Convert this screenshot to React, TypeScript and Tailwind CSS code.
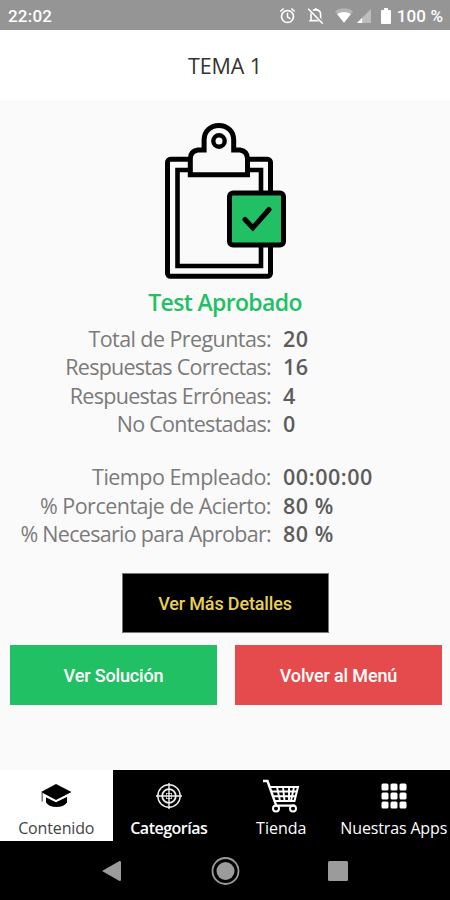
import React from 'react';

type Stat = { label: string; value: string; tracking: string };

const answers: Stat[] = [
  { label: 'Total de Preguntas:', value: '20', tracking: 'tracking-[-0.58px]' },
  { label: 'Respuestas Correctas:', value: '16', tracking: 'tracking-[-0.76px]' },
  { label: 'Respuestas Erróneas:', value: '4', tracking: 'tracking-[-0.7px]' },
  { label: 'No Contestadas:', value: '0', tracking: 'tracking-[-0.71px]' },
];

const results: Stat[] = [
  { label: 'Tiempo Empleado:', value: '00:00:00', tracking: 'tracking-[-0.51px]' },
  { label: '% Porcentaje de Acierto:', value: '80 %', tracking: 'tracking-[-0.52px]' },
  { label: '% Necesario para Aprobar:', value: '80 %', tracking: 'tracking-[-0.71px]' },
];

const StatusBar = () => (
  <div className="flex h-[30px] shrink-0 items-center bg-[#959595] pl-2 pr-[7px] font-['Roboto',sans-serif] text-[17px] font-medium text-white">
    <span className="pt-[3px] tracking-[0.2px]">22:02</span>
    <svg className="ml-auto mt-px h-[18px] w-[104px]" viewBox="279 7 104 18" fill="none">
      <circle cx="286.5" cy="16.5" r="6" stroke="#fff" strokeWidth="1.7" />
      <path d="M286.5 12.8V17l3 1.8M279.3 11.5l3.4-3M293.7 11.5l-3.4-3" stroke="#fff" strokeWidth="1.5" />
      <path d="M310 20.5v-6.3c0-2.5 1.7-4.2 4.8-4.6 3 .4 4.8 2.1 4.8 4.6v6.3zM308.2 20.8h13.2M314.8 8v2" stroke="#fff" strokeWidth="1.6" />
      <path d="M308.2 8.9l13.8 14.4" stroke="#959595" strokeWidth="3.5" />
      <path d="M307.2 8.7l14.6 15" stroke="#fff" strokeWidth="1.6" />
      <path d="M334 11.5c5-4.2 13-4.2 18 0l-9 11.2z" fill="#b5b5b5" />
      <path d="M336.2 14.2c4-3.1 9.6-3.1 13.6 0L343 22.7z" fill="#fff" />
      <path d="M356 23l14-14v14z" fill="#bdbdbd" />
      <path d="M356 23l5.2-5.2V23z" fill="#fff" />
    </svg>
    <svg className="ml-[-3px] mt-px h-[18px] w-[10px]" viewBox="0 0 10 18">
      <path d="M3 1h4v2h2q1 0 1 1v12q0 1-1 1H1q-1 0-1-1V4q0-1 1-1h2z" fill="#fff" />
    </svg>
    <span className="ml-[6px] pt-[3px] tracking-[0.1px]">100 %</span>
  </div>
);

const ClipboardIcon = () => (
  <svg className="ml-[164px] h-[158px] w-[124px]" viewBox="164 122 124 158" fill="none" stroke="#000" strokeWidth="5">
    <rect x="167.5" y="159.3" width="103" height="117" rx="3" />
    <path d="M177.5 170h83.5v96h-83.5z" strokeWidth="4.6" />
    <path
      d="M190.3 174.8v-16q0-7.5 7.5-8.8h6.3v-10c0-19.5 29.6-19.5 29.6 0v10h6.3q7.5 1.3 7.5 8.8v16z"
      fill="#fafafa"
    />
    <circle cx="219" cy="141" r="5.7" strokeWidth="4.4" />
    <rect x="229.5" y="193" width="54" height="52" rx="3.5" fill="#22c064" />
    <path d="M245 219.5l7.8 8.3 16.2-18.3" strokeWidth="5" strokeLinecap="round" />
  </svg>
);

const StatRow = ({ label, value, tracking }: Stat) => (
  <div className="flex h-[28.3px] items-center gap-3 whitespace-nowrap text-[21.5px]">
    <span className={`w-[271px] text-right text-[#7a7a7a] ${tracking}`}>{label}</span>
    <span className="font-semibold tracking-[0.55px] text-[#5c5c5c]">{value}</span>
  </div>
);

const CapIcon = () => (
  <svg className="h-[26px] w-[32px]" viewBox="0 0 32 26">
    <path d="M16 1L31.5 9 16 17 1 9z" fill="#000" />
    <path d="M6 13.5l10 5 11-5v6c-4 6-17 6-21 0z" fill="#000" />
    <path d="M5 13l11 5.4L27 13" stroke="#fff" strokeWidth="1.4" fill="none" />
    <path d="M2.2 10v5M2.2 15v3.5" stroke="#777" strokeWidth="1.5" />
  </svg>
);

const TargetIcon = () => (
  <svg className="h-[26px] w-[26px]" viewBox="0 0 26 26" fill="none" stroke="#eee" strokeWidth="1.4">
    <circle cx="13" cy="13" r="11.2" />
    <circle cx="13" cy="13" r="6.8" strokeWidth="1.8" />
    <path d="M13 0v26M0 13h26" />
    <path d="M10.5 10v6M15.5 10v6M10 10.5h6M10 15.5h6" strokeWidth="0.7" />
  </svg>
);

const CartIcon = () => (
  <svg className="h-[34px] w-[38px]" viewBox="0 0 38 34" fill="none" stroke="#fff" strokeWidth="2">
    <path d="M1 2h4.5l8.7 24.6H33" strokeWidth="2.4" />
    <path d="M8 8h28l-3.5 14H13" />
    <path d="M10 12.5h25M11.5 17.3h22M15 8l3 14M21 8l1.5 14M27 8v14M32 8l-3 14" strokeWidth="1.9" />
    <circle cx="14" cy="29.5" r="3" />
    <circle cx="31" cy="29.5" r="3" />
  </svg>
);

const GridIcon = () => (
  <svg className="h-[26px] w-[26px]" viewBox="0 0 26 26" fill="#fff">
    {[0, 9, 18].map(y =>
      [0, 9, 18].map(x => <rect key={`${x}-${y}`} x={x + 0.5} y={y + 0.5} width="7" height="7" rx="1.5" />)
    )}
  </svg>
);

const tabs = [
  { label: 'Contenido', icon: <CapIcon />, style: 'bg-white text-[#444] tracking-[-0.15px]' },
  { label: 'Categorías', icon: <TargetIcon />, style: 'text-white font-semibold tracking-[-0.5px]' },
  { label: 'Tienda', icon: <CartIcon />, style: 'text-white font-medium tracking-[0px]' },
  { label: 'Nuestras Apps', icon: <GridIcon />, style: 'text-white font-medium tracking-[-0.15px]' },
];

const buttonStyle = "h-[60px] w-[207px] font-['Roboto',sans-serif] text-[18px] font-medium tracking-[-0.15px]";

export default function App() {
  return (
    <div className="flex h-[900px] w-[450px] flex-col overflow-hidden bg-[#fafafa] font-['Open_Sans','Noto_Sans',sans-serif]">
      <StatusBar />
      <header className="flex h-[70px] shrink-0 items-center justify-center bg-white pt-[2px] text-[21.5px] tracking-[-0.1px] text-[#333]">
        TEMA 1
      </header>

      <main className="flex-1 pt-[22px]">
        <ClipboardIcon />
        <h1 className="flex h-[45px] items-center justify-center text-[23px] font-semibold tracking-[-0.65px] text-[#22c064]">
          Test Aprobado
        </h1>
        <div>
          {answers.map(row => <StatRow key={row.label} {...row} />)}
        </div>
        <div className="mt-[25px]">
          {results.map(row => <StatRow key={row.label} {...row} />)}
        </div>
        <div className="mt-[25px] flex justify-center">
          <button className={`${buttonStyle} border border-[#777] bg-black text-[#e8cf58]`}>Ver Más Detalles</button>
        </div>
        <div className="mt-[12px] flex justify-between pl-[10px] pr-[8px]">
          <button className={`${buttonStyle} bg-[#22c064] text-white`}>Ver Solución</button>
          <button className={`${buttonStyle} bg-[#e54b4d] text-white`}>Volver al Menú</button>
        </div>
      </main>

      <nav className="grid h-[71px] shrink-0 grid-cols-4 bg-black">
        {tabs.map(tab => (
          <div key={tab.label} className={`flex flex-col items-center whitespace-nowrap text-[16px] ${tab.style}`}>
            <div className="flex h-[46px] items-center pt-[5px]">{tab.icon}</div>
            <span className="leading-6">{tab.label}</span>
          </div>
        ))}
      </nav>

      <div className="flex h-[59px] shrink-0 items-center justify-center bg-black">
        <svg className="h-[30px] w-[248px]" viewBox="0 0 248 30" fill="#9b9b9b">
          <path d="M1 15L18.5 5q1.5 0 1.5 1v18q0 1-1.5 1z" />
          <circle cx="124.5" cy="15" r="9" />
          <circle cx="124.5" cy="15" r="13" fill="none" stroke="#9b9b9b" strokeWidth="1.8" />
          <rect x="227" y="5" width="20" height="20" rx="1.5" />
        </svg>
      </div>
    </div>
  );
}
